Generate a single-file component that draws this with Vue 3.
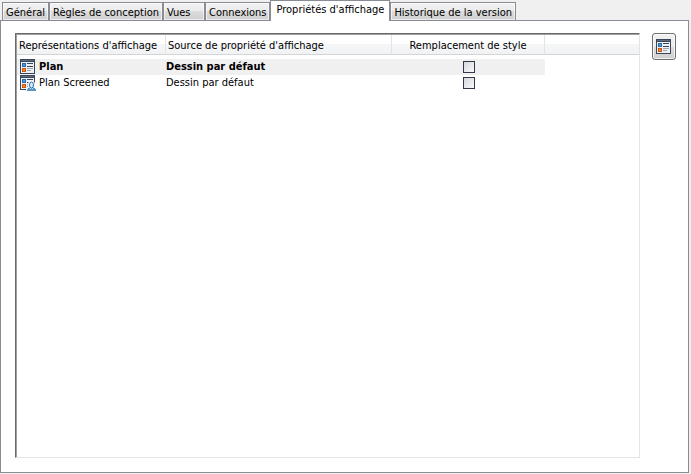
<script setup>
import { ref } from 'vue'

const tabs = [
  'Général',
  'Règles de conception',
  'Vues',
  'Connexions',
  "Propriétés d'affichage",
  'Historique de la version'
]
const activeTab = ref(4)

const rows = ref([
  { name: 'Plan', source: 'Dessin par défaut', override: false, screened: false },
  { name: 'Plan Screened', source: 'Dessin par défaut', override: false, screened: true }
])
const selected = ref(0)
</script>

<template>
  <div class="dialog">
    <div class="tabs" role="tablist">
      <button
        v-for="(tab, i) in tabs"
        :key="tab"
        type="button"
        role="tab"
        class="tab"
        :class="{ 'tab--active': i === activeTab }"
        :aria-selected="i === activeTab"
        @click="activeTab = i"
      >{{ tab }}</button>
    </div>

    <div class="panel" role="tabpanel">
      <div class="list">
        <table>
          <colgroup>
            <col class="col-name">
            <col class="col-source">
            <col class="col-override">
            <col>
          </colgroup>
          <thead>
            <tr>
              <th>Représentations d'affichage</th>
              <th>Source de propriété d'affichage</th>
              <th class="center">Remplacement de style</th>
              <th></th>
            </tr>
          </thead>
          <tbody>
            <tr
              v-for="(row, i) in rows"
              :key="row.name"
              :class="{ selected: i === selected }"
              @click="selected = i"
            >
              <td>
                <div class="name">
                  <svg class="icon" viewBox="0 0 16 16" shape-rendering="crispEdges" aria-hidden="true">
                    <rect x="0" y="0" width="15" height="15" fill="#39465a" />
                    <rect x="1" y="1" width="13" height="1" fill="#5f6b7c" />
                    <rect x="1" y="3" width="13" height="11" fill="#edf0f4" />
                    <rect x="2" y="4" width="4" height="4" fill="#2a6aa8" />
                    <rect x="3" y="5" width="2" height="2" fill="#4a9ade" />
                    <rect x="2" y="9" width="4" height="4" fill="#c8560f" />
                    <rect x="3" y="10" width="2" height="2" fill="#f58a2c" />
                    <path d="M7 4h6v1H7zM7 7h6v1H7z" fill="#39465a" />
                    <path d="M7 9h6v1H7zM7 11h4v1H7z" fill="#9aa3b0" />
                    <g v-if="row.screened" shape-rendering="auto">
                      <path d="M6 16v-3l2-1V8l2-2h3l2 2v4l1 1v3z" fill="#f4f6f9" />
                      <path d="M8 14h2l1-1h1l1 1h3v2H7z" fill="#85bde7" />
                      <path d="M7 15h9M8 14l2-1M15 14l-2-1" fill="none" stroke="#2d73ae" />
                      <ellipse cx="11.500" cy="10" rx="2" ry="3" fill="#d9edfb" stroke="#2d73ae" />
                    </g>
                  </svg>
                  <span>{{ row.name }}</span>
                </div>
              </td>
              <td>{{ row.source }}</td>
              <td class="center">
                <input
                  v-model="row.override"
                  type="checkbox"
                  :aria-label="'Remplacement de style : ' + row.name"
                >
              </td>
              <td></td>
            </tr>
          </tbody>
        </table>
      </div>

      <button type="button" class="tool" aria-label="Propriétés d'affichage">
        <svg class="icon" viewBox="0 0 16 16" shape-rendering="crispEdges" aria-hidden="true">
          <rect x="0" y="0" width="15" height="15" fill="#39465a" />
          <rect x="1" y="1" width="13" height="1" fill="#5f6b7c" />
          <rect x="1" y="3" width="13" height="11" fill="#edf0f4" />
          <rect x="2" y="4" width="4" height="4" fill="#2a6aa8" />
          <rect x="3" y="5" width="2" height="2" fill="#4a9ade" />
          <rect x="2" y="9" width="4" height="4" fill="#c8560f" />
          <rect x="3" y="10" width="2" height="2" fill="#f58a2c" />
          <path d="M7 4h6v1H7zM7 7h6v1H7z" fill="#39465a" />
          <path d="M7 9h6v1H7zM7 11h4v1H7z" fill="#9aa3b0" />
        </svg>
      </button>
    </div>
  </div>
</template>

<style>
body {
  margin: 0;
  background: #f0f0f0;
}
</style>

<style scoped>
.dialog {
  display: flex;
  flex-direction: column;
  box-sizing: border-box;
  height: 100vh;
  padding: 0 2px 1px 0;
  background: #f0f0f0;
  color: #000;
  font-family: Tahoma, "DejaVu Sans Condensed", "Noto Sans", sans-serif;
  font-size: 11px;
  line-height: 16px;
}

/* ---- Tabs ---- */
.tabs {
  display: flex;
  align-items: flex-end;
  height: 21px;
  padding-left: 2px;
  margin-bottom: -1px;
  z-index: 1;
}

.tab {
  box-sizing: border-box;
  flex: none;
  height: 19px;
  min-width: 42px;
  padding: 2px 3px 0;
  border: 1px solid #898c95;
  background: linear-gradient(#f2f2f2 0%, #ebebeb 50%, #dcdcdc 50%, #cfcfcf 100%);
  box-shadow: inset 0 0 0 1px rgba(255, 255, 255, 0.6);
  color: inherit;
  font: inherit;
  text-align: left;
  white-space: nowrap;
}

.tab--active {
  height: 21px;
  padding: 0 5px 3px;
  border-bottom: 0;
  background: #fff;
  box-shadow: none;
}

/* ---- Panel ---- */
.panel {
  display: flex;
  flex: 1;
  align-items: flex-start;
  gap: 12px;
  min-height: 0;
  padding: 12px 12px 14px 14px;
  border: 1px solid #898c95;
  background: #fff;
}

.list {
  box-sizing: border-box;
  flex: 1;
  align-self: stretch;
  min-width: 0;
  padding: 1px 0 0 1px;
  border: 1px solid #e3e3e3;
  border-top-color: #696969;
  border-left-color: #696969;
  box-shadow: inset 1px 1px 0 #a0a0a0;
  overflow: hidden;
}

table {
  width: 100%;
  border-collapse: separate;
  border-spacing: 0;
  table-layout: fixed;
}

.col-name {
  width: 149px;
}

.col-source {
  width: 226px;
}

.col-override {
  width: 153px;
}

th {
  box-sizing: border-box;
  height: 20px;
  padding: 3px 2px 0;
  border-right: 1px solid #e2e3e5;
  border-bottom: 1px solid #d5d5d5;
  background: linear-gradient(#fff 0%, #fff 45%, #f6f7f9 45%, #f1f2f4 100%);
  font-weight: normal;
  line-height: 16px;
  text-align: left;
  white-space: nowrap;
}

th:last-child {
  border-right: 0;
}

tbody::before {
  content: '';
  display: block;
  height: 4px;
}

td {
  height: 16px;
  padding: 0;
  line-height: 16px;
  white-space: nowrap;
}

.selected td {
  background: #f0f0f0;
  font-weight: bold;
}

.selected td:last-child {
  background: none;
}

th.center,
td.center {
  text-align: center;
}

.name {
  display: flex;
  align-items: center;
  gap: 3px;
  padding-left: 3px;
}

.icon {
  display: block;
  flex: none;
  width: 16px;
  height: 16px;
}

input {
  display: block;
  box-sizing: border-box;
  appearance: none;
  width: 12px;
  height: 12px;
  margin: 2px auto;
  border: 1px solid #33374a;
  background: linear-gradient(135deg, #d3d6dd, #fafafa);
}

input:checked {
  background: #33374a;
  box-shadow: inset 0 0 0 2px #fff;
}

/* ---- Side button ---- */
.tool {
  display: flex;
  align-items: center;
  justify-content: center;
  box-sizing: border-box;
  width: 24px;
  height: 27px;
  padding: 0;
  border: 1px solid #707070;
  border-radius: 3px;
  background: linear-gradient(#f2f2f2 0%, #ebebeb 50%, #dddddd 50%, #cfcfcf 100%);
  box-shadow: inset 0 0 0 1px rgba(255, 255, 255, 0.7);
}
</style>
